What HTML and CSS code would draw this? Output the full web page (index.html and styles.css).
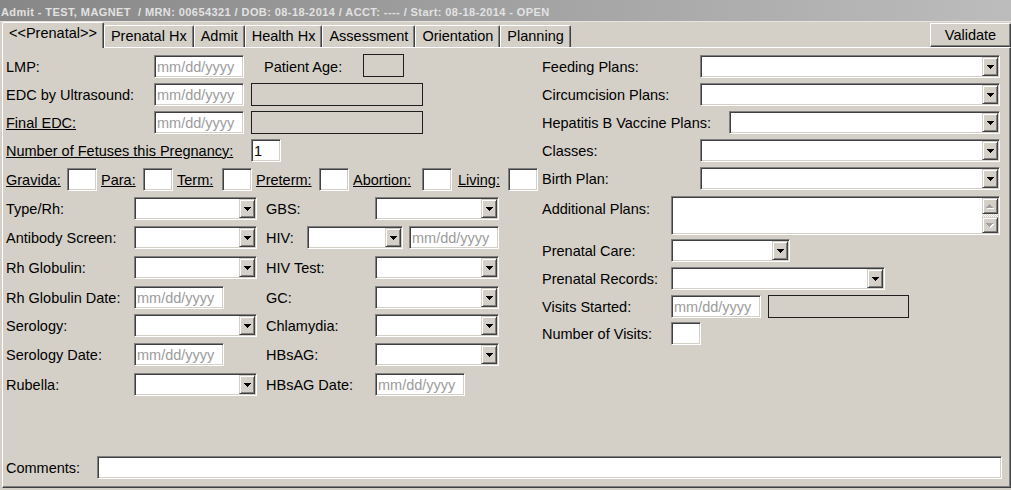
FILE: index.html
```html
<!DOCTYPE html>
<html>
<head>
<meta charset="utf-8">
<title>Prenatal</title>
<link rel="stylesheet" href="styles.css">
</head>
<body>
<div class="title">Admit - TEST, MAGNET  / MRN: 00654321 / DOB: 08-18-2014 / ACCT: ---- / Start: 08-18-2014 - OPEN</div>
<div class="tabbar">
  <div class="tab active">&lt;&lt;Prenatal&gt;&gt;</div>
  <div class="tab">Prenatal Hx</div>
  <div class="tab">Admit</div>
  <div class="tab">Health Hx</div>
  <div class="tab">Assessment</div>
  <div class="tab">Orientation</div>
  <div class="tab">Planning</div>
  <div class="validate">Validate</div>
</div>
<div class="panel">
  <div class="form">
    <div class="left">
      <div class="top-rows">
        <div class="row">
          <span class="lbl lbl-main">LMP:</span>
          <input class="sunk date" placeholder="mm/dd/yyyy">
          <span class="lbl lbl-age">Patient Age:</span>
          <span class="ro ro-age"></span>
        </div>
        <div class="row">
          <span class="lbl lbl-main">EDC by Ultrasound:</span>
          <input class="sunk date" placeholder="mm/dd/yyyy">
          <span class="ro ro-wide"></span>
        </div>
        <div class="row">
          <span class="lbl lbl-main u">Final EDC:</span>
          <input class="sunk date" placeholder="mm/dd/yyyy">
          <span class="ro ro-wide"></span>
        </div>
        <div class="row">
          <span class="lbl lbl-fetus u">Number of Fetuses this Pregnancy:</span>
          <input class="sunk small" value="1">
        </div>
        <div class="row row-gpa">
          <span class="lbl u l-gravida">Gravida:</span><input class="sunk small">
          <span class="lbl u l-para">Para:</span><input class="sunk small">
          <span class="lbl u l-term">Term:</span><input class="sunk small">
          <span class="lbl u l-preterm">Preterm:</span><input class="sunk small">
          <span class="lbl u l-abortion">Abortion:</span><input class="sunk small">
          <span class="lbl u l-living">Living:</span><input class="sunk small">
        </div>
      </div>
      <div class="labs">
        <div class="row"><span class="lbl la">Type/Rh:</span><div class="sunk select sel-a"><span class="drop"><svg width="7" height="4" viewBox="0 0 7 4"><path d="M0 0h7v1h-1v1h-1v1h-1v1h-1v-1h-1v-1h-1v-1h-1z"/></svg></span></div></div>
        <div class="row"><span class="lbl lb">GBS:</span><div class="sunk select sel-b"><span class="drop"><svg width="7" height="4" viewBox="0 0 7 4"><path d="M0 0h7v1h-1v1h-1v1h-1v1h-1v-1h-1v-1h-1v-1h-1z"/></svg></span></div></div>

        <div class="row"><span class="lbl la">Antibody Screen:</span><div class="sunk select sel-a"><span class="drop"><svg width="7" height="4" viewBox="0 0 7 4"><path d="M0 0h7v1h-1v1h-1v1h-1v1h-1v-1h-1v-1h-1v-1h-1z"/></svg></span></div></div>
        <div class="row"><span class="lbl lhiv">HIV:</span><div class="sunk select sel-hiv"><span class="drop"><svg width="7" height="4" viewBox="0 0 7 4"><path d="M0 0h7v1h-1v1h-1v1h-1v1h-1v-1h-1v-1h-1v-1h-1z"/></svg></span></div><input class="sunk date hiv-date" placeholder="mm/dd/yyyy"></div>

        <div class="row"><span class="lbl la">Rh Globulin:</span><div class="sunk select sel-a"><span class="drop"><svg width="7" height="4" viewBox="0 0 7 4"><path d="M0 0h7v1h-1v1h-1v1h-1v1h-1v-1h-1v-1h-1v-1h-1z"/></svg></span></div></div>
        <div class="row"><span class="lbl lb">HIV Test:</span><div class="sunk select sel-b"><span class="drop"><svg width="7" height="4" viewBox="0 0 7 4"><path d="M0 0h7v1h-1v1h-1v1h-1v1h-1v-1h-1v-1h-1v-1h-1z"/></svg></span></div></div>

        <div class="row"><span class="lbl la">Rh Globulin Date:</span><input class="sunk date" placeholder="mm/dd/yyyy"></div>
        <div class="row"><span class="lbl lb">GC:</span><div class="sunk select sel-b"><span class="drop"><svg width="7" height="4" viewBox="0 0 7 4"><path d="M0 0h7v1h-1v1h-1v1h-1v1h-1v-1h-1v-1h-1v-1h-1z"/></svg></span></div></div>

        <div class="row"><span class="lbl la">Serology:</span><div class="sunk select sel-a"><span class="drop"><svg width="7" height="4" viewBox="0 0 7 4"><path d="M0 0h7v1h-1v1h-1v1h-1v1h-1v-1h-1v-1h-1v-1h-1z"/></svg></span></div></div>
        <div class="row"><span class="lbl lb">Chlamydia:</span><div class="sunk select sel-b"><span class="drop"><svg width="7" height="4" viewBox="0 0 7 4"><path d="M0 0h7v1h-1v1h-1v1h-1v1h-1v-1h-1v-1h-1v-1h-1z"/></svg></span></div></div>

        <div class="row"><span class="lbl la">Serology Date:</span><input class="sunk date" placeholder="mm/dd/yyyy"></div>
        <div class="row"><span class="lbl lb">HBsAG:</span><div class="sunk select sel-b"><span class="drop"><svg width="7" height="4" viewBox="0 0 7 4"><path d="M0 0h7v1h-1v1h-1v1h-1v1h-1v-1h-1v-1h-1v-1h-1z"/></svg></span></div></div>

        <div class="row"><span class="lbl la">Rubella:</span><div class="sunk select sel-a"><span class="drop"><svg width="7" height="4" viewBox="0 0 7 4"><path d="M0 0h7v1h-1v1h-1v1h-1v1h-1v-1h-1v-1h-1v-1h-1z"/></svg></span></div></div>
        <div class="row"><span class="lbl lb">HBsAG Date:</span><input class="sunk date" placeholder="mm/dd/yyyy"></div>
      </div>
    </div>
    <div class="right">
      <div class="row"><span class="lbl r158">Feeding Plans:</span><div class="sunk select grow"><span class="drop"><svg width="7" height="4" viewBox="0 0 7 4"><path d="M0 0h7v1h-1v1h-1v1h-1v1h-1v-1h-1v-1h-1v-1h-1z"/></svg></span></div></div>
      <div class="row"><span class="lbl r158">Circumcision Plans:</span><div class="sunk select grow"><span class="drop"><svg width="7" height="4" viewBox="0 0 7 4"><path d="M0 0h7v1h-1v1h-1v1h-1v1h-1v-1h-1v-1h-1v-1h-1z"/></svg></span></div></div>
      <div class="row"><span class="lbl r187">Hepatitis B Vaccine Plans:</span><div class="sunk select grow"><span class="drop"><svg width="7" height="4" viewBox="0 0 7 4"><path d="M0 0h7v1h-1v1h-1v1h-1v1h-1v-1h-1v-1h-1v-1h-1z"/></svg></span></div></div>
      <div class="row"><span class="lbl r158">Classes:</span><div class="sunk select grow"><span class="drop"><svg width="7" height="4" viewBox="0 0 7 4"><path d="M0 0h7v1h-1v1h-1v1h-1v1h-1v-1h-1v-1h-1v-1h-1z"/></svg></span></div></div>
      <div class="row"><span class="lbl r158">Birth Plan:</span><div class="sunk select grow"><span class="drop"><svg width="7" height="4" viewBox="0 0 7 4"><path d="M0 0h7v1h-1v1h-1v1h-1v1h-1v-1h-1v-1h-1v-1h-1z"/></svg></span></div></div>
      <div class="row row-ta">
        <span class="lbl r129 ta-lbl">Additional Plans:</span>
        <div class="sunk textarea">
          <div class="vscroll">
            <span class="sbtn"><svg width="8" height="5" viewBox="0 0 8 5"><path fill="#fff" d="M4 1h1v1h1v1h1v1h1v1h-7v-1h1v-1h1v-1h1z"/><path fill="#a0a0a0" d="M3 0h1v1h1v1h1v1h1v1h-7v-1h1v-1h1v-1h1z"/></svg></span>
            <span class="track"></span>
            <span class="sbtn"><svg width="8" height="5" viewBox="0 0 8 5"><path fill="#fff" d="M1 1h7v1h-1v1h-1v1h-1v1h-1v-1h-1v-1h-1v-1h-1z"/><path fill="#a0a0a0" d="M0 0h7v1h-1v1h-1v1h-1v1h-1v-1h-1v-1h-1v-1h-1z"/></svg></span>
          </div>
        </div>
      </div>
      <div class="row row-care"><span class="lbl r129">Prenatal Care:</span><div class="sunk select sel-care"><span class="drop"><svg width="7" height="4" viewBox="0 0 7 4"><path d="M0 0h7v1h-1v1h-1v1h-1v1h-1v-1h-1v-1h-1v-1h-1z"/></svg></span></div></div>
      <div class="row"><span class="lbl r129">Prenatal Records:</span><div class="sunk select sel-rec"><span class="drop"><svg width="7" height="4" viewBox="0 0 7 4"><path d="M0 0h7v1h-1v1h-1v1h-1v1h-1v-1h-1v-1h-1v-1h-1z"/></svg></span></div></div>
      <div class="row"><span class="lbl r129">Visits Started:</span><input class="sunk date" placeholder="mm/dd/yyyy"><span class="ro ro-visits"></span></div>
      <div class="row row-num"><span class="lbl r129">Number of Visits:</span><input class="sunk small"></div>
    </div>
  </div>
  <div class="comments">
    <span class="lbl l-comments">Comments:</span>
    <input class="sunk comment-input">
  </div>
</div>
</body>
</html>
```

FILE: styles.css
```css
html, body {
  margin: 0;
  padding: 0;
}
body {
  width: 1011px;
  height: 490px;
  overflow: hidden;
  background: #d4d0c8;
  font-family: "Liberation Sans", Arial, sans-serif;
  font-size: 14.5px;
  color: #000;
}

/* title bar */
.title {
  height: 21px;
  overflow: hidden;
  border-bottom: 1px solid #e6e4de;
  background: linear-gradient(to right, #878787, #bcbcbc);
  color: #e2e2e2;
  font-weight: bold;
  font-size: 11px;
  letter-spacing: 0.42px;
  line-height: 25px;
  padding-left: 1px;
  white-space: pre;
}

/* tabs */
.tabbar {
  display: flex;
  align-items: flex-end;
  height: 25px;
  padding-left: 2px;
}
.tab {
  height: 22px;
  box-sizing: border-box;
  padding: 2px 6px 0;
  border: 1px solid #fff;
  border-bottom: 0;
  border-right-color: #404040;
  box-shadow: inset -1px 0 #808080;
  border-radius: 2px 2px 0 0;
  line-height: 16px;
  white-space: nowrap;
}
.tab.active {
  height: 26px;
  margin-bottom: -1px;
  position: relative;
  z-index: 1;
  background: #d4d0c8;
}
.validate {
  margin-left: auto;
  align-self: flex-start;
  margin-top: 1px;
  width: 81px;
  height: 24px;
  box-sizing: border-box;
  border: 1px solid;
  border-color: #fff #404040 #404040 #fff;
  box-shadow: inset -1px -1px #808080;
  display: flex;
  align-items: center;
  justify-content: center;
}

/* panel */
.panel {
  margin-left: 2px;
  width: 1009px;
  height: 441px;
  box-sizing: border-box;
  border: 1px solid #fff;
  border-right-color: #404040;
  border-bottom-color: #404040;
  box-shadow: inset -1px -1px #808080;
  padding: 7px 10px 8px 3px;
  display: flex;
  flex-direction: column;
}
.form {
  display: flex;
}
.left {
  width: 536px;
  flex: none;
  display: flex;
  flex-direction: column;
}
.right {
  flex: 1;
  display: flex;
  flex-direction: column;
  gap: 5px;
}

.row {
  display: flex;
  align-items: center;
  height: 23px;
}
.lbl {
  flex: none;
  white-space: nowrap;
}
.u {
  text-decoration: underline;
}

/* 3D sunken field */
.sunk {
  box-sizing: border-box;
  height: 23px;
  background: #fff;
  border: 1px solid;
  border-color: #808080 #fff #fff #808080;
  box-shadow: inset 1px 1px #404040, inset -1px -1px #d4d0c8;
  font: inherit;
  color: #000;
  outline: none;
  margin: 0;
  flex: none;
}
input.sunk {
  padding: 0 0 0 2px;
}
input.sunk::placeholder {
  color: #9c9c9c;
  opacity: 1;
}
.date { width: 90px; }
.small { width: 30px; }

.ro {
  box-sizing: border-box;
  height: 23px;
  border: 1px solid #1e1e1e;
  flex: none;
}
.ro-age { width: 41px; align-self: flex-start; margin-top: -1px; }
.ro-wide { width: 172px; margin-left: 7px; }
.ro-visits { width: 141px; margin-left: 7px; }

/* top rows */
.top-rows {
  display: flex;
  flex-direction: column;
  gap: 5px;
}
.lbl-main { width: 148px; }
.lbl-age { width: 99px; margin-left: 20px; }
.lbl-fetus { width: 245px; }
.row-gpa { margin-top: 1px; }
.l-gravida { width: 61px; }
.l-para { width: 42px; margin-left: 4px; }
.l-term { width: 45px; margin-left: 4px; }
.l-preterm { width: 63px; margin-left: 4px; }
.l-abortion { width: 69px; margin-left: 4px; }
.l-living { width: 50px; margin-left: 6px; }

/* lab grid */
.labs {
  margin-top: 6px;
  display: grid;
  grid-template-columns: 251px 233px;
  column-gap: 9px;
  grid-template-rows: 29px 30px 30px 28px 29px 30px 23px;
  align-items: start;
}
.la { width: 128px; }
.lb { width: 109px; }
.lhiv { width: 41px; }
.sel-a { width: 123px; }
.sel-b { width: 124px; }
.sel-hiv { width: 96px; }
.hiv-date { margin-left: 6px; }

/* select */
.select {
  display: flex;
  justify-content: flex-end;
  padding: 1px;
}
.select.grow { flex: 1; }
.drop {
  width: 16px;
  height: 19px;
  box-sizing: border-box;
  background: #d4d0c8;
  border: 1px solid;
  border-color: #d4d0c8 #404040 #404040 #d4d0c8;
  box-shadow: inset 1px 1px #fff, inset -1px -1px #808080;
  display: flex;
  align-items: center;
  justify-content: center;
}
.drop svg { display: block; fill: #000; }

/* right column */
.r158 { width: 158px; }
.r187 { width: 187px; }
.r129 { width: 129px; }
.row-ta {
  height: 39px;
  align-items: flex-start;
  margin-top: 1px;
}
.ta-lbl {
  line-height: 23px;
  padding-top: 2px;
}
.textarea {
  flex: 1;
  height: 39px;
  display: flex;
  justify-content: flex-end;
  padding: 1px;
}
.vscroll {
  width: 16px;
  display: flex;
  flex-direction: column;
}
.sbtn {
  height: 16px;
  flex: none;
  box-sizing: border-box;
  background: #d4d0c8;
  border: 1px solid;
  border-color: #d4d0c8 #404040 #404040 #d4d0c8;
  box-shadow: inset 1px 1px #fff, inset -1px -1px #808080;
  display: flex;
  align-items: center;
  justify-content: center;
}
.sbtn svg { display: block; }
.track {
  flex: 1;
  background: repeating-conic-gradient(#fff 0 25%, #d4d0c8 0 50%) 0 0 / 2px 2px;
}
.row-care { margin-top: -1px; }
.sel-care { width: 119px; }
.sel-rec { width: 214px; }
.row-num { margin-top: -1px; }

/* comments */
.comments {
  margin-top: auto;
  display: flex;
  align-items: center;
  height: 23px;
}
.l-comments { width: 91px; }
.comment-input {
  flex: 1;
  margin-right: -2px;
}
```
